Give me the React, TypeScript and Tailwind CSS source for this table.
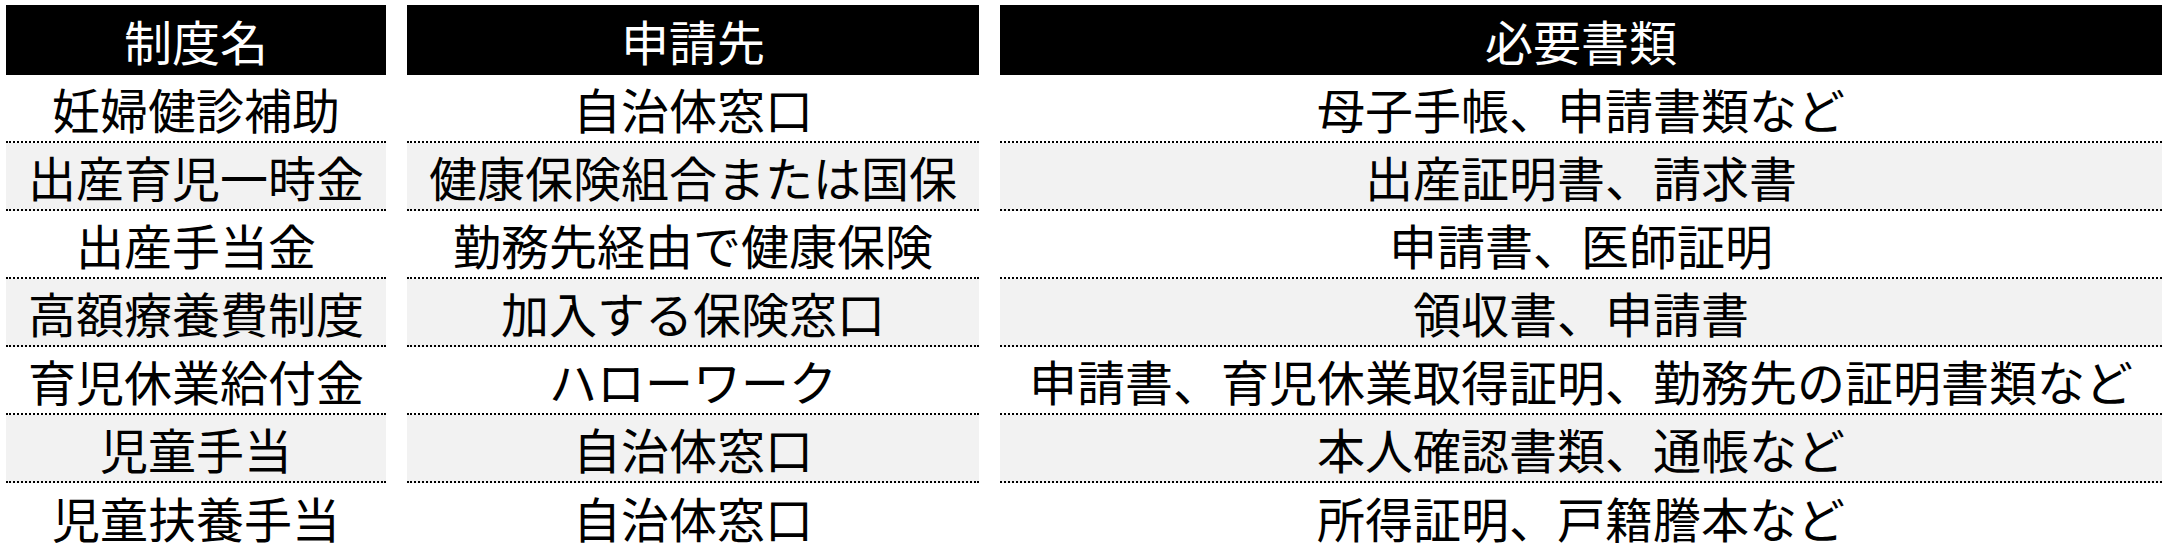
const rows = [
  { name: '妊婦健診補助', to: '自治体窓口', docs: '母子手帳、申請書類など' },
  { name: '出産育児一時金', to: '健康保険組合または国保', docs: '出産証明書、請求書' },
  { name: '出産手当金', to: '勤務先経由で健康保険', docs: '申請書、医師証明' },
  { name: '高額療養費制度', to: '加入する保険窓口', docs: '領収書、申請書' },
  { name: '育児休業給付金', to: 'ハローワーク', docs: '申請書、育児休業取得証明、勤務先の証明書類など' },
  { name: '児童手当', to: '自治体窓口', docs: '本人確認書類、通帳など' },
  { name: '児童扶養手当', to: '自治体窓口', docs: '所得証明、戸籍謄本など' },
]

const headers = ['制度名', '申請先', '必要書類']

function Cell({ text, index }: { text: string; index: number }) {
  const last = index === rows.length - 1
  const gray = index % 2 === 1
  return (
    <div
      className={`flex h-[68px] items-center justify-center whitespace-nowrap ${
        gray ? 'bg-[#f2f2f2]' : 'bg-white'
      } ${last ? '' : 'border-b-2 border-dotted border-black'}`}
    >
      {text}
    </div>
  )
}

export default function App() {
  return (
    <div
      className="min-h-[558px] bg-white pl-[6px] pt-[5px] text-[48px] leading-none text-black"
      style={{ fontFamily: '"Noto Sans CJK JP", "Noto Sans", sans-serif' }}
    >
      <div className="grid grid-cols-[380px_572px_1162px] gap-x-[21px]">
        {headers.map((h) => (
          <div key={h} className="flex h-[70px] items-center justify-center bg-black text-white">
            {h}
          </div>
        ))}
        {rows.map((r, i) => (
          <>
            <Cell key={`n${i}`} text={r.name} index={i} />
            <Cell key={`t${i}`} text={r.to} index={i} />
            <Cell key={`d${i}`} text={r.docs} index={i} />
          </>
        ))}
      </div>
    </div>
  )
}
